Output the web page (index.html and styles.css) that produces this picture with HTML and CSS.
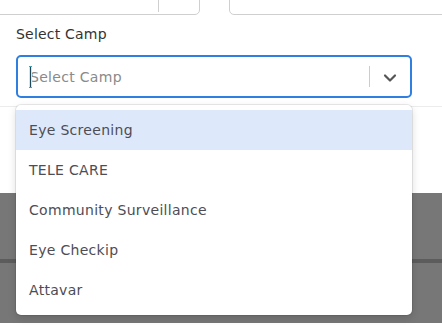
FILE: index.html
```html
<!DOCTYPE html>
<html>
<head>
<meta charset="utf-8">
<link rel="stylesheet" href="styles.css">
</head>
<body>
<div class="page">
  <div class="top-row">
    <div class="field field-left"><span class="field-div"></span></div>
    <div class="field field-right"></div>
  </div>
  <div class="card">
    <label class="label">Select Camp</label>
    <div class="select-wrap">
      <div class="select">
        <div class="value"><span class="caret"></span><span class="placeholder">Select Camp</span></div>
        <span class="sep"></span>
        <span class="chev">
          <svg width="14" height="14" viewBox="0 0 14 14"><path d="M2 4.5 L7 9.5 L12 4.5" fill="none" stroke="#555" stroke-width="2.2" stroke-linecap="round" stroke-linejoin="round"/></svg>
        </span>
      </div>
      <ul class="menu">
        <li class="opt active">Eye Screening</li>
        <li class="opt">TELE CARE</li>
        <li class="opt">Community Surveillance</li>
        <li class="opt">Eye Checkip</li>
        <li class="opt">Attavar</li>
      </ul>
    </div>
  </div>
  <div class="blank"></div>
  <div class="overlay">
    <div class="band"></div>
    <div class="line"></div>
    <div class="rest"></div>
  </div>
</div>
</body>
</html>
```
FILE: styles.css
```css
* { box-sizing: border-box; }
html, body { margin: 0; padding: 0; background: #fff; }
body { font-family: "DejaVu Sans", "Liberation Sans", sans-serif; overflow: hidden; width: 442px; height: 325px; }
.page { width: 442px; }
.top-row {
  display: grid;
  grid-template-columns: 210px 223px;
  gap: 29px;
  margin: -31px 0 0 -10px;
}
.field {
  height: 46px;
  border: 1px solid #cfcfcf;
  border-radius: 5px;
  position: relative;
  overflow: hidden;
}
.field-div {
  position: absolute;
  left: 167px; top: 26px;
  width: 1px; height: 16px;
  background: #cfcfcf;
}
.card {
  padding: 9px 30px 8px 16px;
  border-bottom: 1px solid #ececec;
  position: relative;
  z-index: 2;
}
.label {
  display: block;
  font-size: 14px;
  letter-spacing: 0.2px;
  color: #333;
  line-height: 20px;
  margin-bottom: 11px;
}
.select-wrap { position: relative; }
.select {
  height: 43px;
  border: 2px solid #2f7fe0;
  border-radius: 5px;
  display: flex;
  align-items: center;
  padding-left: 11px;
}
.value { flex: 1; display: flex; align-items: center; }
.caret {
  width: 3px; height: 22px;
  background: #bfeff3;
  border: 1px solid #3aa6b8;
  border-left: none; border-right: none;
  position: relative;
  margin-right: -2px;
}
.caret::after {
  content: ""; position: absolute; left: 1px; top: 0; width: 1px; height: 100%; background: #1d4a5a;
}
.placeholder { font-size: 14px; letter-spacing: 0.3px; color: #8a8a8a; }
.sep { width: 1px; height: 21px; background: #cccccc; }
.chev { width: 40px; display: flex; justify-content: center; align-items: center; padding-top: 2px; }
.menu {
  position: absolute;
  left: 0; right: 0;
  top: 50px;
  margin: 0;
  padding: 5px 0;
  list-style: none;
  background: #fff;
  border-radius: 5px;
  box-shadow: 0 0 0 1px rgba(0,0,0,0.08), 0 3px 8px rgba(0,0,0,0.15);
}
.opt {
  height: 40px;
  display: flex;
  align-items: center;
  padding-left: 13px;
  font-size: 14px;
  letter-spacing: 0.3px;
  color: #4d4d55;
}
.opt.active { background: #dde9fb; }
.blank { height: 86px; }
.overlay { background: #777; }
.band { height: 66px; }
.line { height: 4px; background: #5c5c5c; }
.rest { height: 60px; }
```
